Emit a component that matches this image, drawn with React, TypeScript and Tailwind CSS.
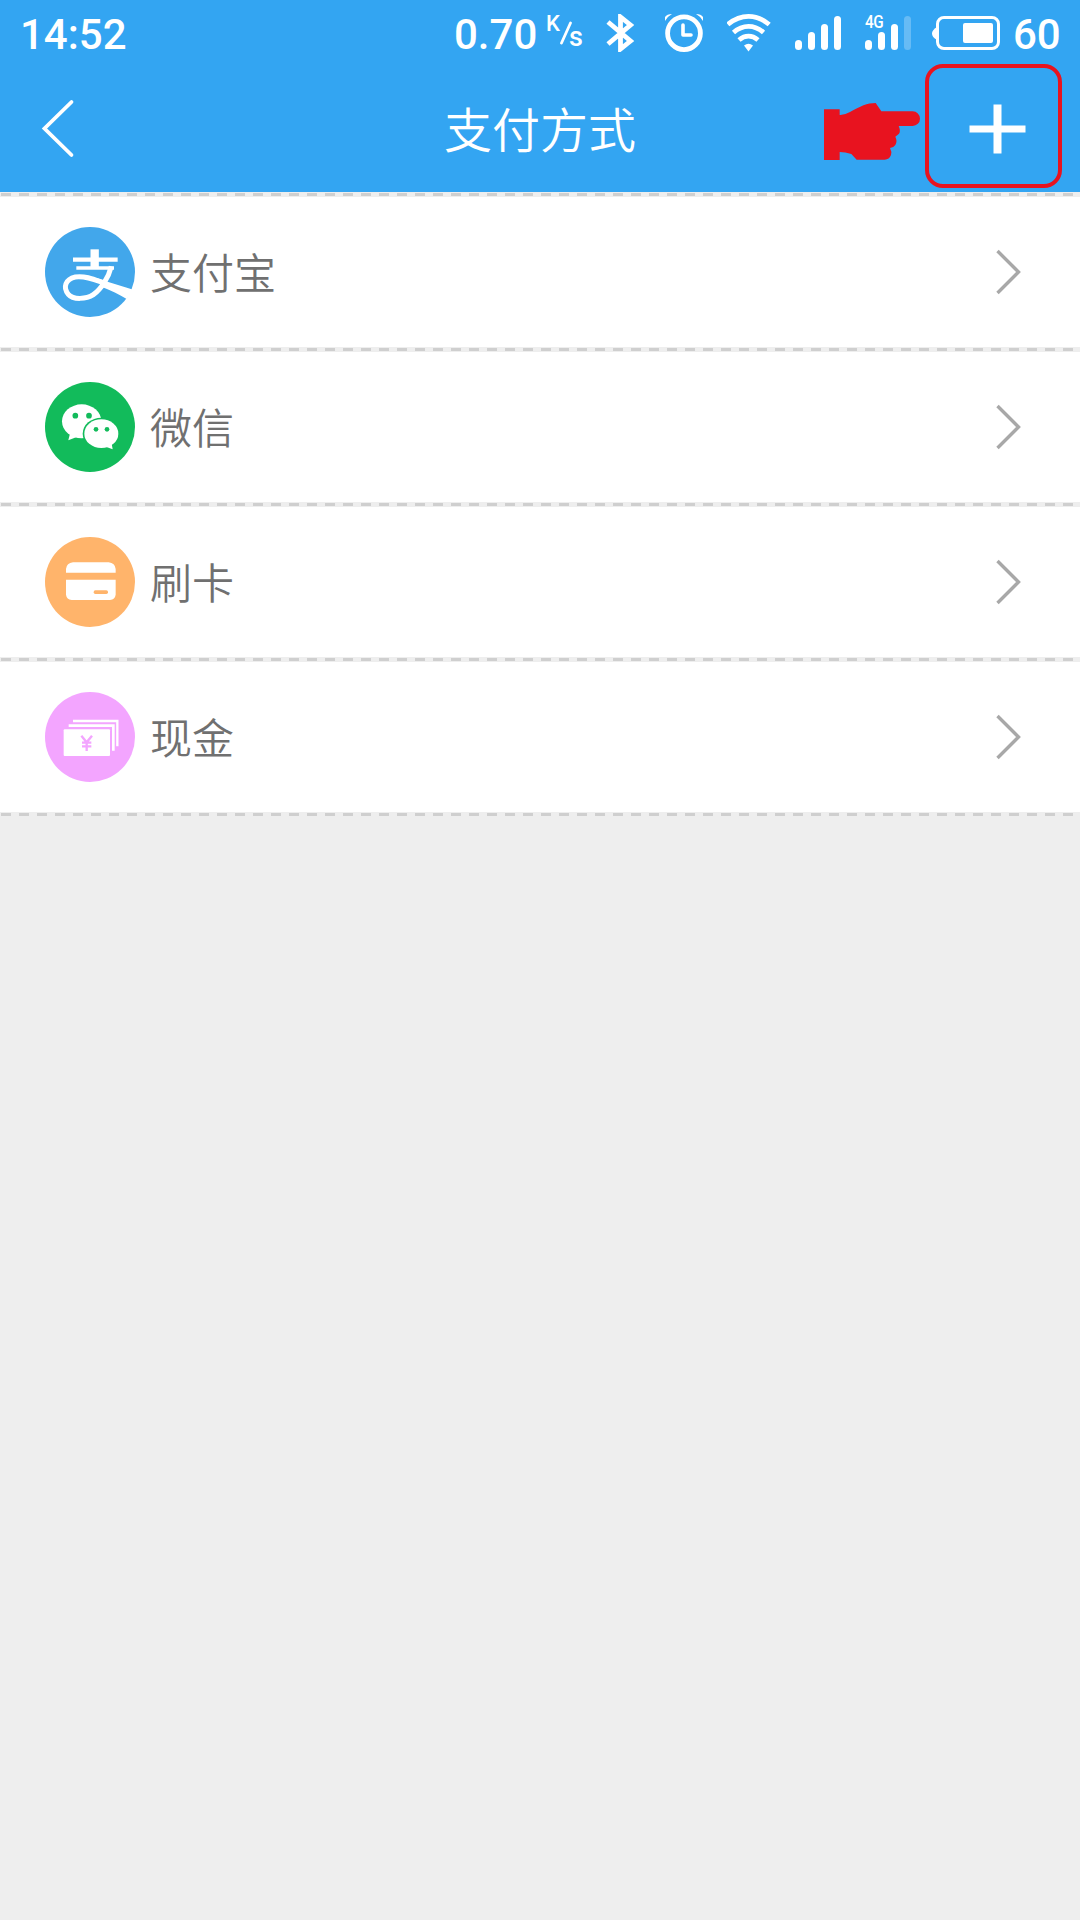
import React from 'react';

const CJK = "font-['Noto_Sans_CJK_SC',sans-serif]";

function BluetoothIcon() {
  return (
    <svg className="mt-[2px] ml-[23px] shrink-0" width="30" height="38" viewBox="0 0 30 38" fill="none">
      <path d="M2 8 L24.5 27 L14.5 35 V3 L24.5 11 L2 30" stroke="#fff" strokeWidth="4.8" />
    </svg>
  );
}

function AlarmIcon() {
  return (
    <svg className="mt-[2px] ml-[29px] shrink-0" width="38" height="38" viewBox="0 0 38 38" fill="none">
      <circle cx="19" cy="19.2" r="16.4" stroke="#fff" strokeWidth="4.8" />
      <path d="M18 11V21H26" stroke="#fff" strokeWidth="3.6" strokeLinecap="round" strokeLinejoin="round" />
      <path d="M0 7V3Q2 0 7 0Q3 2 0 7ZM38 7V3Q36 0 31 0Q35 2 38 7Z" fill="#fff" />
    </svg>
  );
}

function WifiIcon() {
  return (
    <svg className="mt-[2px] ml-[24px] shrink-0" width="46" height="38" viewBox="0 0 46 38" fill="none">
      <g stroke="#fff" strokeWidth="4.8">
        <path d="M0.800 10.500Q10.500 2.400 21.500 2.400T42.200 10.500" />
        <path d="M6.500 18.500Q13.500 12.400 21.500 12.400T36.500 18.500" />
        <path d="M12 26Q16.500 22.200 21.500 22.200T31 26" />
      </g>
      <path d="M17 31.500Q21.500 28 26 31.500L21.500 37.600Z" fill="#fff" />
    </svg>
  );
}

function Signal({ dim = false }: { dim?: boolean }) {
  return (
    <div className="flex h-[34px] items-end gap-[6px]">
      <div className="h-[10px] w-[7px] rounded-full bg-white" />
      <div className="h-[18px] w-[7px] rounded-full bg-white" />
      <div className="h-[26px] w-[7px] rounded-full bg-white" />
      <div className={dim ? 'h-[34px] w-[7px] rounded-full bg-white/25' : 'h-[34px] w-[7px] rounded-full bg-white'} />
    </div>
  );
}

function BatteryIcon() {
  return (
    <svg className="mt-[2px] ml-[21px] shrink-0" width="68" height="34" viewBox="0 0 68 34" fill="none">
      <path d="M5 11Q0 14 0 17.500T5 24Z" fill="#fff" />
      <rect x="5.500" y="1.500" width="61" height="31" rx="6.500" stroke="#fff" strokeWidth="3" />
      <rect x="31" y="7" width="30" height="20" rx="2" fill="#fff" />
    </svg>
  );
}

function StatusBar() {
  return (
    <div className="flex h-16 items-center pl-[20px] font-[Roboto,sans-serif] text-[42px] leading-none font-medium text-white">
      <span className="w-[106px] pt-[5px]">14:52</span>
      <span className="ml-[328px] w-[84px] pt-[5px]">0.70</span>
      <div className="ml-[8px] flex h-[36px] w-[37px] text-[22px] leading-none">
        <span className="mt-[-1px] w-[14px]">K</span>
        <svg className="mt-[7px] w-[12px] shrink-0" height="24" viewBox="0 0 12 24">
          <path d="M1.500 22L10.500 2" stroke="#fff" strokeWidth="2.800" strokeLinecap="round" />
        </svg>
        <span className="mt-[10px] -ml-[3px] text-[27px]">s</span>
      </div>
      <BluetoothIcon />
      <AlarmIcon />
      <WifiIcon />
      <div className="mt-[2px] ml-[22px]"><Signal /></div>
      <div className="relative mt-[2px] ml-[24px]">
        <Signal dim />
        <span className="absolute -top-[3px] left-0 origin-left scale-x-[0.85] text-[18px] leading-none font-medium tracking-[-0.500px]">4G</span>
      </div>
      <BatteryIcon />
      <span className="ml-[13px] pt-[5px]">60</span>
    </div>
  );
}

function Header() {
  return (
    <header className="flex h-32 items-start justify-between pr-[18px] pl-[41px]">
      <svg className="mt-[35px] w-[360px]" width="360" height="60" viewBox="0 0 360 60" fill="none">
        <path d="M30.500 3L3.500 29.500L30.500 56" stroke="#fff" strokeWidth="3.800" strokeLinecap="round" />
      </svg>
      <h1 className={`${CJK} mt-[27px] ml-[43px] w-[192px] text-[48px] leading-[72px] font-[350] whitespace-nowrap text-white`}>支付方式</h1>
      <div className="ml-auto flex items-start">
        <svg className="mt-[39px] mr-[5px]" width="96" height="57" viewBox="72 144 288 171">
          <path
            fill="#e8131f"
            d="M72 163H119V180Q132 181 150 171C180 154 202 144 227 144L244 169H338A22 22 0 0 1 338 213H296Q303 228 297 236L286 245Q293 259 286 270Q281 278 270 279Q276 290 273 300Q268 314 254 314H170L154 297Q136 291 119 291V315H72Z"
          />
        </svg>
        <button className="flex h-[124px] w-[137px] items-start rounded-[18px] border-4 border-[#e8131f]">
          <svg className="mt-[36px] ml-[40px]" width="57" height="50" viewBox="0 0 57 50" fill="#fff">
            <path d="M24.500 0.500h8v21h24v7h-24v21h-8v-21h-24v-7h24z" />
          </svg>
        </button>
      </div>
    </header>
  );
}

function Divider() {
  return (
    <div className="h-[5px] bg-[#eee] pt-px">
      <div className="h-[3px] bg-[repeating-linear-gradient(90deg,#eee_0_1px,#cfcfcf_1px_11px,#eee_11px_18px)]" />
    </div>
  );
}

function AlipayIcon() {
  return (
    <svg width="90" height="90" viewBox="0 0 270 270" fill="none">
      <circle cx="135" cy="135" r="135" fill="#42a7eb" />
      <g stroke="#fff">
        <path d="M149 67V125" strokeWidth="25" />
        <path d="M84 98H218" strokeWidth="13" />
        <path d="M94 123H207" strokeWidth="10" />
        <path d="M199 118C191 151 168 187 145 203C124 217 84 219 70 202C53 181 61 157 91 150C125 145 155 161 185 171" strokeWidth="15" />
      </g>
      <path d="M155 153L190 165L265 188L245 216C222 203 201 192 173 181Z" fill="#fff" />
    </svg>
  );
}

function WechatIcon() {
  return (
    <svg width="90" height="90" viewBox="0 0 270 270">
      <circle cx="135" cy="135" r="135" fill="#12bb5b" />
      <ellipse cx="110" cy="118" rx="59" ry="51" fill="#fff" />
      <path d="M76 151L70 175L101 163Z" fill="#fff" />
      <ellipse cx="169" cy="155" rx="56" ry="48" fill="#12bb5b" />
      <ellipse cx="169" cy="155" rx="51" ry="43" fill="#fff" />
      <path d="M178 193L203 202L199 180Z" fill="#fff" />
      <g fill="#12bb5b">
        <circle cx="91" cy="101" r="8.500" />
        <circle cx="132" cy="101" r="8.500" />
        <circle cx="153" cy="142" r="7" />
        <circle cx="186" cy="142" r="7" />
      </g>
    </svg>
  );
}

function CardIcon() {
  return (
    <svg width="90" height="90" viewBox="0 0 270 270">
      <circle cx="135" cy="135" r="135" fill="#ffb46b" />
      <path fill="#fff" d="M63 107V96Q65 78 84 76H191Q210 78 212 96V107ZM63 128H212V173Q210 187 195 189H80Q65 187 63 173Z" />
      <rect x="146" y="160" width="43" height="11" rx="5" fill="#ffb46b" />
    </svg>
  );
}

function CashIcon() {
  return (
    <svg width="90" height="90" viewBox="0 0 270 270" fill="none">
      <circle cx="135" cy="135" r="135" fill="#f3a5ff" />
      <rect x="56" y="112" width="139" height="80" rx="3" fill="#fff" />
      <path d="M71 101H205V176" stroke="#fff" strokeWidth="8" />
      <path d="M84 87H217V163" stroke="#fff" strokeWidth="7" />
      <path d="M109 131L125 151L141 131M125 151V177M111 152H139M111 163H139" stroke="#f3a5ff" strokeWidth="7" />
    </svg>
  );
}

const methods = [
  { name: '支付宝', Icon: AlipayIcon },
  { name: '微信', Icon: WechatIcon },
  { name: '刷卡', Icon: CardIcon },
  { name: '现金', Icon: CashIcon },
];

export default function App() {
  return (
    <div className="min-h-[1920px] w-[1080px] bg-[#eee]">
      <div className="h-48 bg-[#33a5f2]">
        <StatusBar />
        <Header />
      </div>
      <Divider />
      {methods.map(({ name, Icon }) => (
        <React.Fragment key={name}>
          <div className="flex h-[150px] items-center bg-white pr-[58px] pl-[45px]">
            <Icon />
            <span className={`${CJK} -mt-[2px] ml-[15px] text-[42px] leading-[60px] font-[350] text-[#707070]`}>{name}</span>
            <svg className="-mt-px ml-auto" width="26" height="46" viewBox="0 0 26 46" fill="none">
              <path d="M1.500 2L22.500 23L1.500 44" stroke="#a8a8a8" strokeWidth="3.400" />
            </svg>
          </div>
          <Divider />
        </React.Fragment>
      ))}
    </div>
  );
}
